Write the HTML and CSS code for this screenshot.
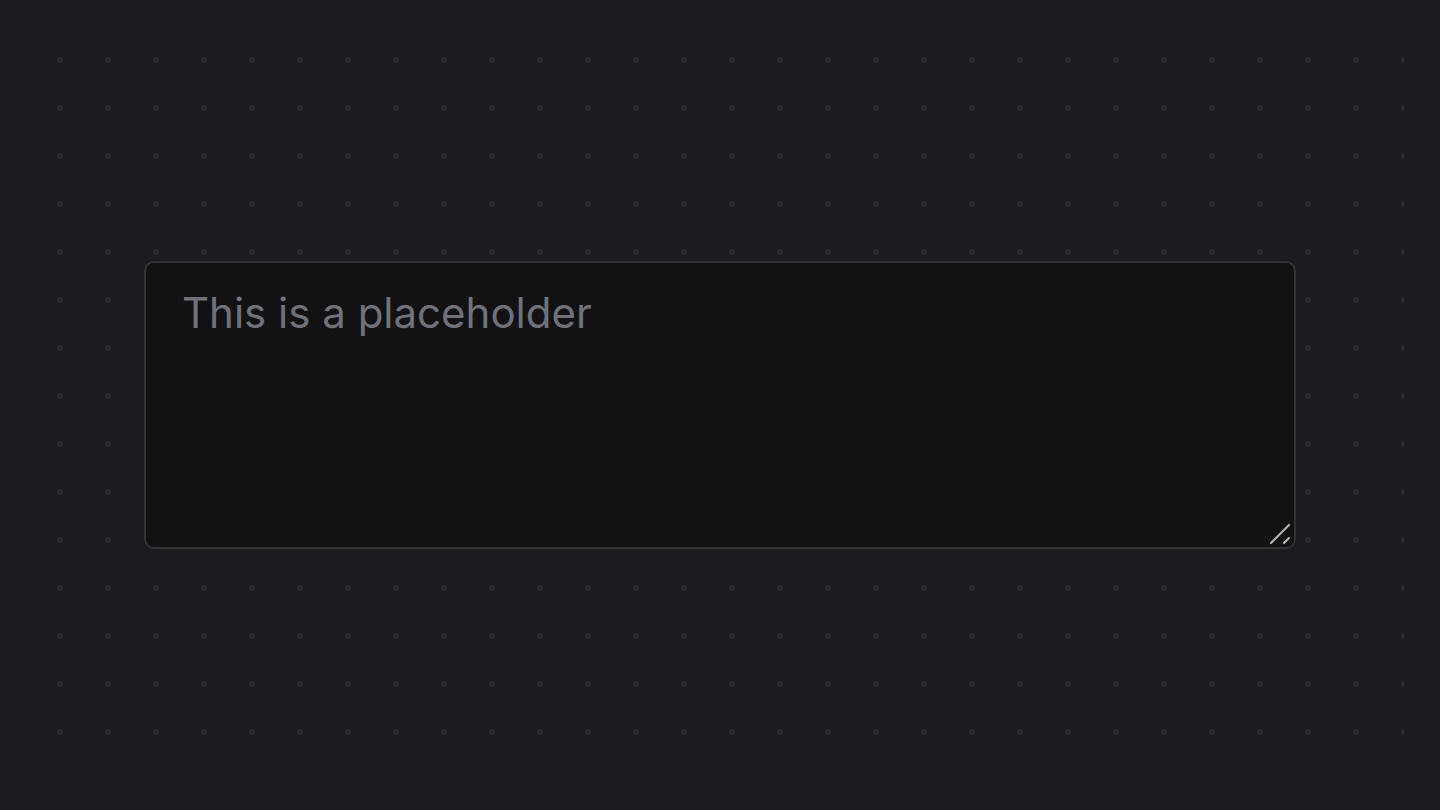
FILE: index.html
```html
<!DOCTYPE html>
<html lang="en">
<head>
<meta charset="utf-8">
<title>Textarea</title>
<link rel="stylesheet" href="styles.css">
</head>
<body>
<main class="canvas">
  <div class="field-wrap">
    <textarea class="field" placeholder="This is a placeholder"></textarea>
    <svg class="grip" width="24" height="24" viewBox="0 0 24 24" aria-hidden="true">
      <line x1="3" y1="20" x2="21" y2="2" stroke="#b0b0b4" stroke-width="2.2" stroke-linecap="round"/>
      <line x1="16" y1="20" x2="21" y2="15" stroke="#b0b0b4" stroke-width="2.2" stroke-linecap="round"/>
    </svg>
  </div>
</main>
</body>
</html>
```

FILE: styles.css
```css
html, body {
  margin: 0;
  height: 100%;
}
body {
  background: #1b1c1f;
  color-scheme: dark;
  padding: 36px;
  box-sizing: border-box;
  font-family: Inter, "Noto Sans", sans-serif;
}
.canvas {
  height: 100%;
  background-image: radial-gradient(circle at 24px 24px, #2b2c30 0, #2b2c30 2.6px, transparent 3.2px);
  background-size: 48px 48px;
  display: flex;
  align-items: center;
  justify-content: center;
}
.field-wrap {
  position: relative;
  width: 1152px;
  height: 288px;
}
.field {
  display: block;
  width: 100%;
  height: 100%;
  box-sizing: border-box;
  border: 2px solid #323337;
  border-radius: 10px;
  background: #121214;
  padding: 18px 36px;
  font-family: Inter, "Noto Sans", sans-serif;
  font-size: 42px;
  line-height: 1.5;
  color: #e4e4e7;
  outline: none;
  resize: none;
}
.field::placeholder {
  color: #71717a;
  opacity: 1;
}
.grip {
  position: absolute;
  right: 4px;
  bottom: 2px;
  pointer-events: none;
}
```
